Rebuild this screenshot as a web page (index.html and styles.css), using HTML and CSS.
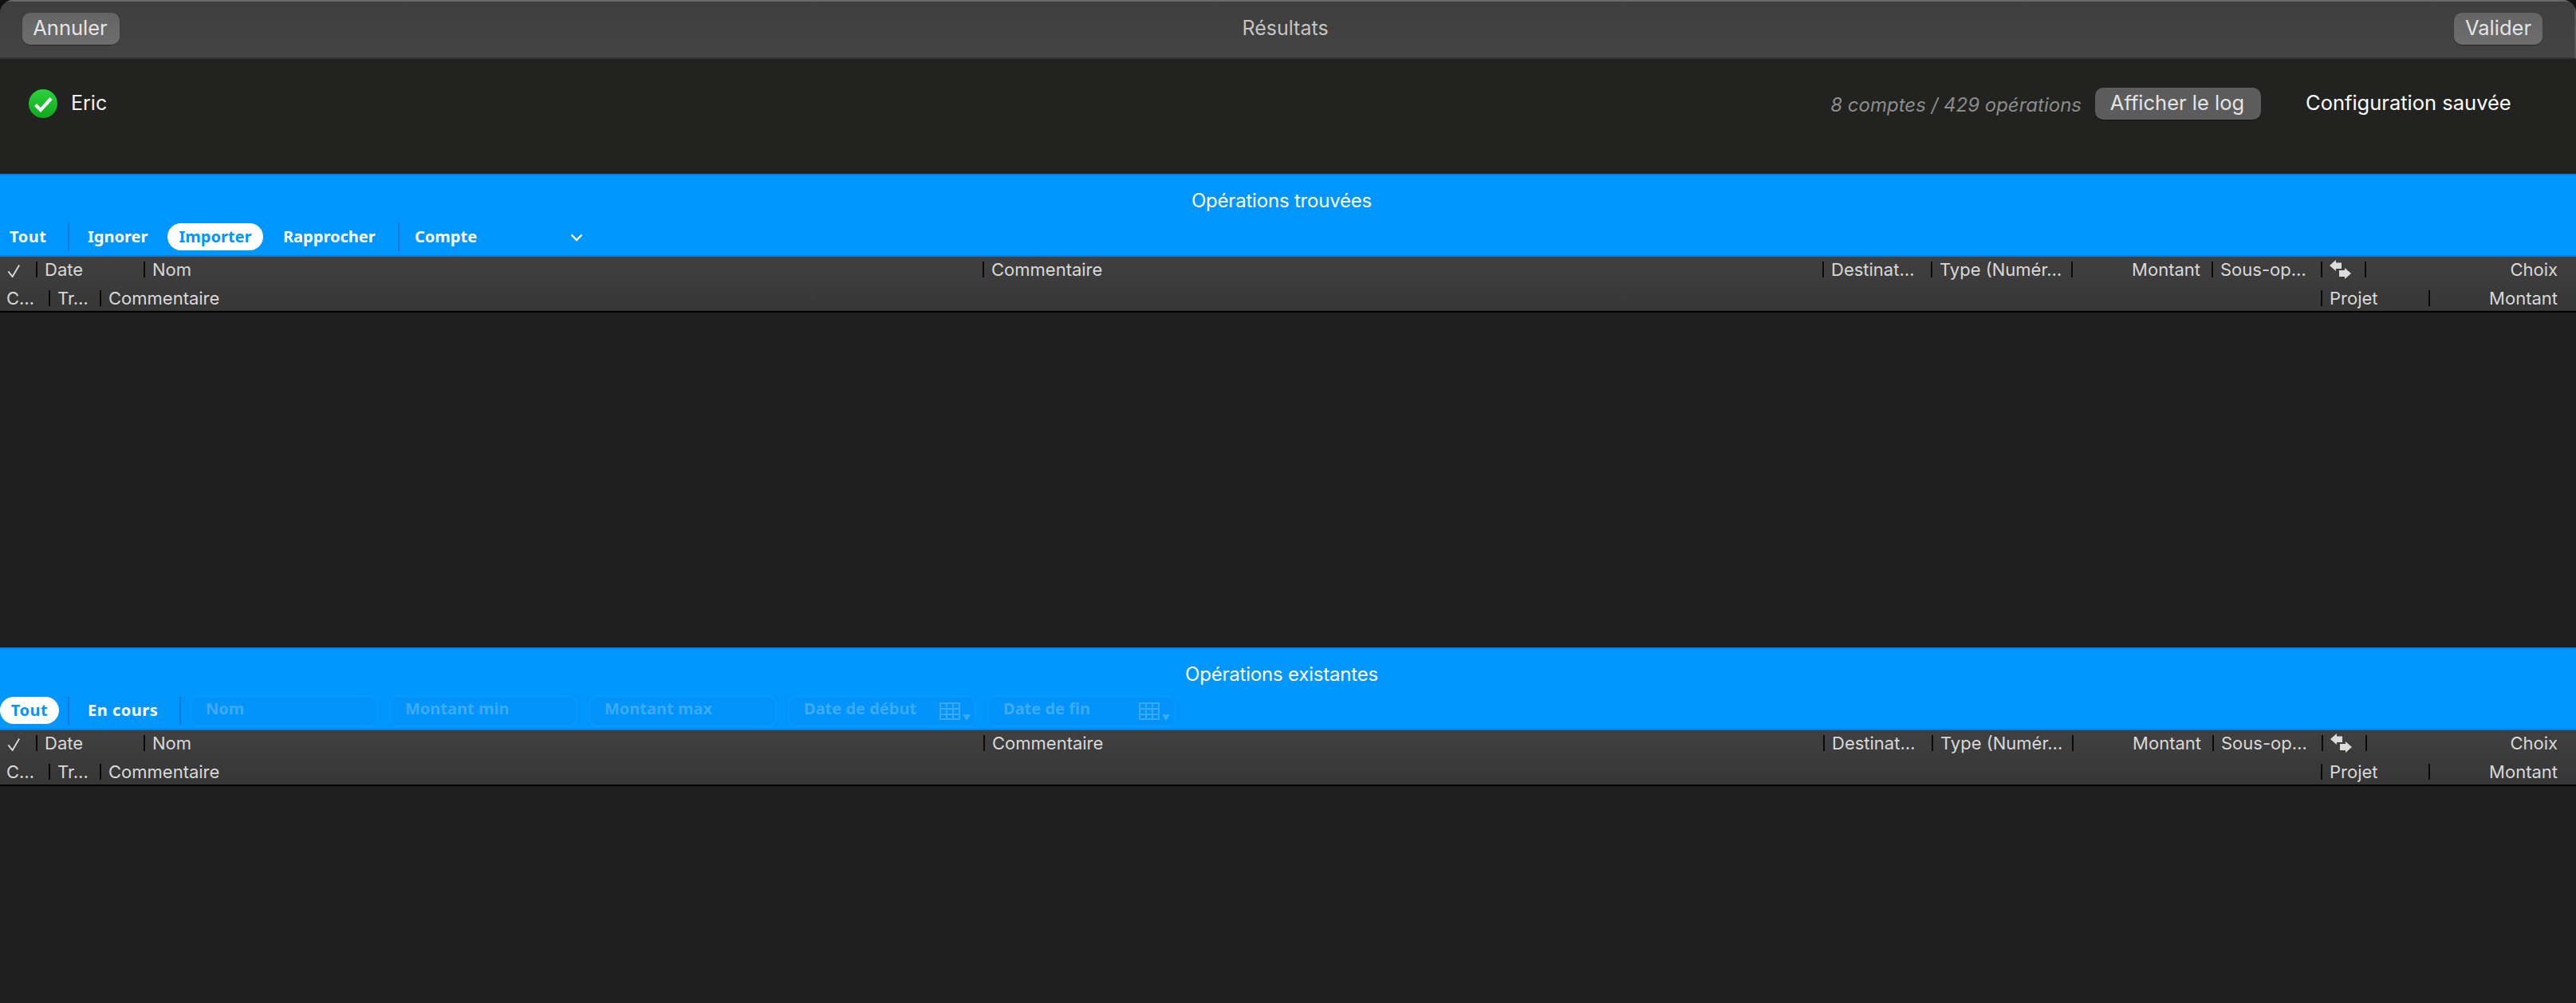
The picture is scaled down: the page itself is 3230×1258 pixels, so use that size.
FILE: index.html
```html
<!DOCTYPE html>
<html lang="fr">
<head>
<meta charset="utf-8">
<title>Résultats</title>
<link rel="stylesheet" href="styles.css">
</head>
<body>
<div class="window">
  <header class="titlebar">
    <button class="btn btn-annuler">Annuler</button>
    <div class="title">Résultats</div>
    <button class="btn btn-valider">Valider</button>
  </header>

  <section class="info">
    <svg class="ok" viewBox="0 0 36 36" aria-hidden="true">
      <defs><linearGradient id="g" x1="0" y1="0" x2="0" y2="1"><stop offset="0" stop-color="#2bd33c"/><stop offset="1" stop-color="#0ea81c"/></linearGradient></defs>
      <circle cx="18" cy="18" r="18" fill="url(#g)"/>
      <path d="M8.500 19.500 L15 26 L28 11.500" fill="none" stroke="#fff" stroke-width="4.200"/>
    </svg>
    <div class="name">Eric</div>
    <div class="counts">8 comptes / 429 opérations</div>
    <button class="btn btn-log">Afficher le log</button>
    <div class="saved">Configuration sauvée</div>
  </section>

  <section class="band">
    <div class="band-title">Opérations trouvées</div>
    <div class="filters">
      <span class="tab t-tout1">Tout</span><i class="sep s1"></i>
      <span class="tab t-ign">Ignorer</span>
      <span class="tab pill t-imp">Importer</span>
      <span class="tab t-rap">Rapprocher</span><i class="sep s2"></i>
      <span class="tab t-cpt">Compte</span>
      <svg class="chev" viewBox="0 0 16 10" aria-hidden="true"><path d="M1.500 1.500 L8 8 L14.500 1.500" fill="none" stroke="#fff" stroke-width="2.400"/></svg>
    </div>
  </section>
  <section class="thead">
    <div class="row r1">
      <div class="c c-check"><svg class="tick" viewBox="0 0 18 18" aria-hidden="true"><path d="M1.500 10 L7 17 L16 1.500" fill="none" stroke="#d8d8d8" stroke-width="2"/></svg></div><div class="c c-date">Date</div><div class="c c-nom">Nom</div><div class="c c-com">Commentaire</div><div class="c c-dest">Destinat…</div><div class="c c-type">Type (Numér…</div><div class="c c-mont">Montant</div><div class="c c-sous">Sous-op…</div>
      <div class="c c-arr"><svg class="arrows" viewBox="0 0 28 24" aria-hidden="true"><path d="M0 7 L8 0 L8 3.500 L15 3.500 L15 11 L8 11 L8 14 Z M27 17 L19 24 L19 21 L12 21 L12 13 L19 13 L19 10 Z" fill="#dcdcdc"/></svg></div>
      <div class="c c-choix">Choix</div>
    </div>
    <div class="row r2">
      <div class="c c-cc">C…</div><div class="c c-tr">Tr…</div><div class="c c-com2">Commentaire</div><div class="c c-proj">Projet</div><div class="c c-mont2">Montant</div>
    </div>
  </section>
  <section class="body b1"></section>

  <section class="band">
    <div class="band-title">Opérations existantes</div>
    <div class="filters">
      <span class="tab pill t-tout2">Tout</span><i class="sep s3"></i>
      <span class="tab t-enc">En cours</span><i class="sep s4"></i>
      <div class="field f-first">Nom</div>
      <div class="field">Montant min</div>
      <div class="field">Montant max</div>
      <div class="field">Date de début
        <svg class="cal" viewBox="0 0 40 24" aria-hidden="true"><path d="M0 0H26V22H0Z M2 2V7H8V2Z M10 2V7H16V2Z M18 2V7H24V2Z M2 9V14H8V9Z M10 9V14H16V9Z M18 9V14H24V9Z M2 16V20H8V16Z M10 16V20H16V16Z M18 16V20H24V16Z" fill-rule="evenodd" fill="#3aa9ff"/><path d="M29 15H39L34 23Z" fill="#3aa9ff"/></svg>
      </div>
      <div class="field">Date de fin
        <svg class="cal" viewBox="0 0 40 24" aria-hidden="true"><path d="M0 0H26V22H0Z M2 2V7H8V2Z M10 2V7H16V2Z M18 2V7H24V2Z M2 9V14H8V9Z M10 9V14H16V9Z M18 9V14H24V9Z M2 16V20H8V16Z M10 16V20H16V16Z M18 16V20H24V16Z" fill-rule="evenodd" fill="#3aa9ff"/><path d="M29 15H39L34 23Z" fill="#3aa9ff"/></svg>
      </div>
    </div>
  </section>
  <section class="thead t2">
    <div class="row r1">
      <div class="c c-check"><svg class="tick" viewBox="0 0 18 18" aria-hidden="true"><path d="M1.500 10 L7 17 L16 1.500" fill="none" stroke="#d8d8d8" stroke-width="2"/></svg></div><div class="c c-date">Date</div><div class="c c-nom n2">Nom</div><div class="c c-com">Commentaire</div><div class="c c-dest d2">Destinat…</div><div class="c c-type">Type (Numér…</div><div class="c c-mont">Montant</div><div class="c c-sous">Sous-op…</div>
      <div class="c c-arr"><svg class="arrows" viewBox="0 0 28 24" aria-hidden="true"><path d="M0 7 L8 0 L8 3.500 L15 3.500 L15 11 L8 11 L8 14 Z M27 17 L19 24 L19 21 L12 21 L12 13 L19 13 L19 10 Z" fill="#dcdcdc"/></svg></div>
      <div class="c c-choix">Choix</div>
    </div>
    <div class="row r2">
      <div class="c c-cc">C…</div><div class="c c-tr">Tr…</div><div class="c c-com2">Commentaire</div><div class="c c-proj">Projet</div><div class="c c-mont2">Montant</div>
    </div>
  </section>
  <section class="body b2"></section>
</div>
</body>
</html>
```
FILE: styles.css
```css
* { box-sizing: border-box; }
html, body { margin: 0; height: 100%; background: #111; }
body { font-family: Inter, "Liberation Sans", sans-serif; overflow: hidden; }
.window { width: 3230px; height: 1258px; display: flex; flex-direction: column; border-radius: 16px 16px 0 0; overflow: hidden; background: #1e1e1e; }

.titlebar { height: 74px; flex: none; display: flex; align-items: flex-start; padding: 14px 40px 0 28px; border-top: 2px solid #6a6a6a; border-bottom: 2px solid #333; border-right: 2px solid #555; background: linear-gradient(#3e3e3e, #444); }
.title { flex: 1; text-align: center; font-size: 25px; line-height: 38px; color: #c4c4c4; padding-right: 4px; }
.btn { font-family: inherit; border: 0; height: 40px; padding: 0 0 2px; border-radius: 10px; color: #e4e4e4; font-size: 25.500px; line-height: 38px; background: linear-gradient(#646464, #6e6e6e); box-shadow: 0 1px 1px rgba(0,0,0,.35); }
.btn-annuler { width: 122px; padding-right: 2px; }
.btn-valider { width: 111px; }

.info { height: 144px; flex: none; display: flex; align-items: flex-start; padding: 36px 82px 0 36px; background: #222220; }
.ok { width: 36px; height: 36px; margin-top: 2px; }
.name { font-size: 25px; line-height: 38px; color: #f2f2f2; margin-left: 17px; flex: 1; }
.counts { font-size: 24px; line-height: 40px; font-style: italic; color: #8b8b8b; margin-top: 2px; }
.btn-log { width: 208px; margin-left: 17px; background: #5c5c5c; padding-right: 2px; }
.saved { width: 313px; padding-left: 56px; font-size: 25.500px; line-height: 38px; color: #fff; white-space: nowrap; }

.band { height: 104px; flex: none; display: flex; flex-direction: column; background: #0096ff; border-top: 2px solid #0080e2; border-bottom: 2px solid #0080e2; }
.band-title { height: 58px; padding: 18px 16px 0 0; text-align: center; font-size: 24px; line-height: 28px; letter-spacing: -.2px; color: #fff; }
.filters { display: flex; align-items: center; height: 42px; font-family: "Noto Sans", sans-serif; font-weight: 700; font-size: 20px; color: #fff; padding-bottom: 4px; }
.tab { line-height: 34px; height: 34px; white-space: nowrap; }
.pill { background: #fff; color: #0096ff; border-radius: 17px; text-align: center; }
.sep { display: block; width: 2px; height: 36px; background: #0378d0; flex: none; }
.t-tout1 { margin-left: 12px; width: 73px; letter-spacing: .5px; }
.t-ign { margin-left: 23px; width: 100px; }
.t-imp { width: 120px; }
.t-rap { margin-left: 25px; width: 144px; }
.t-cpt { margin-left: 19px; width: 195px; }
.chev { width: 16px; height: 10px; margin-top: 2px; }
.t-tout2 { width: 74px; letter-spacing: .5px; }
.s3 { margin-left: 11px; }
.t-enc { width: 114px; letter-spacing: .5px; margin-left: 23px; margin-right: 1px; }
.f-first { margin-left: 11px; }
.field { width: 236px; height: 40px; flex: none; margin-right: 14px; margin-top: 2px; padding-left: 18px; border: 2px solid #0a99ff; border-radius: 12px; background: #0094fc; line-height: 30px; color: #3fabff; display: flex; align-items: flex-start; white-space: nowrap; position: relative; }
.cal { position: absolute; right: 4px; top: 7px; width: 40px; height: 24px; }

.thead { height: 70px; flex: none; display: flex; flex-direction: column; padding-top: 6px; background: linear-gradient(#404040, #363636); border-bottom: 2px solid #000; color: #d8d8d8; font-size: 22px; }
.row { display: flex; height: 20px; flex: none; }
.r2 { margin-top: 16px; }
.c { height: 20px; line-height: 20px; flex: none; padding-left: 9px; border-left: 2px solid #0a0a0a; white-space: nowrap; }
.c-check { width: 45px; border-left: 0; padding-left: 9px; }
.tick { display: block; width: 17px; height: 17px; margin-top: 3px; }
.c-date { width: 135px; }
.c-nom { width: 1052px; }
.n2 { width: 1053px; }
.c-com { width: 1053px; }
.d2 { width: 135px; }
.c-dest { width: 136px; }
.c-type { width: 176px; }
.c-mont { width: 176px; text-align: right; padding-right: 14px; }
.c-sous { width: 137px; }
.c-arr { width: 55px; padding-left: 9px; }
.arrows { display: block; width: 28px; height: 24px; margin-top: -2px; }
.c-choix { flex: 1; text-align: right; padding-right: 23px; }
.c-cc { width: 61px; border-left: 0; padding-left: 8px; }
.c-tr { width: 64px; }
.c-com2 { width: 2785px; }
.c-proj { width: 135px; }
.c-mont2 { flex: 1; text-align: right; padding-right: 23px; }

.body { flex: none; background: #1e1e1e; }
.b1 { height: 420px; }
.b2 { flex: 1; }
```
